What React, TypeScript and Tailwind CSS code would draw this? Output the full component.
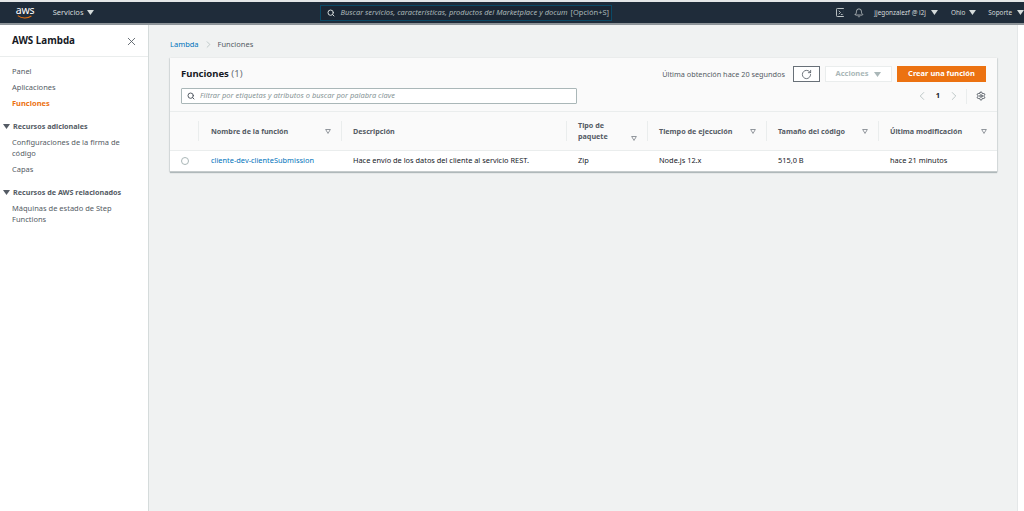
import { ChevronLeft, ChevronRight, RotateCw, Search, Settings, X, Bell } from "lucide-react";

const font = { fontFamily: '"Noto Sans", sans-serif' };

function Caret({ className = "" }: { className?: string }) {
  return (
    <svg viewBox="0 0 10 7" className={`h-[5px] w-[7px] ${className}`}>
      <path d="M0 0h10L5 7z" fill="currentColor" />
    </svg>
  );
}

function SortIcon() {
  return (
    <svg viewBox="0 0 8 7" className="h-[5px] w-[6px] shrink-0 text-[#687078]">
      <path d="M.7.7h6.6L4 6.2z" fill="none" stroke="currentColor" strokeWidth="1" />
    </svg>
  );
}

function AwsLogo() {
  return (
    <div className="flex w-[18px] flex-col items-center">
      <span className="text-[10.5px] leading-[9px] tracking-[-0.2px] text-white">aws</span>
      <svg viewBox="0 0 20 5" className="h-[4px] w-[18px]">
        <path d="M1 .8C6 4.6 13 4.6 18 1.2" fill="none" stroke="#ec7211" strokeWidth="1.3" />
      </svg>
    </div>
  );
}

function TopBar() {
  return (
    <header className="flex h-[25px] shrink-0 items-center border-y-[2px] border-t-[#e4e7e8] border-b-[#8d9499] bg-[#1f2c3a] text-[#d5dbdb]">
      <div className="ml-[16px] w-[37px]">
        <AwsLogo />
      </div>
      <span className="text-[7.5px]">Servicios</span>
      <Caret className="ml-[4px]" />
      <div className="ml-[226px] flex h-[16px] w-[294px] items-center border border-[#0b4a66] bg-[#1b2633] pl-[6px]">
        <Search className="h-[8px] w-[8px] text-[#d5dbdb]" strokeWidth={3} />
        <span className="ml-[5px] text-[7.5px] whitespace-nowrap text-[#aab7b8] italic">
          Buscar servicios, características, productos del Marketplace y docum
        </span>
        <span className="ml-[3px] text-[7.5px] whitespace-nowrap text-[#aab7b8]">[Opción+S]</span>
      </div>
      <svg viewBox="0 0 10 10" className="ml-[224px] h-[9px] w-[9px] text-[#d5dbdb]">
        <rect x=".5" y=".5" width="9" height="9" rx="1" fill="none" stroke="currentColor" />
        <path d="M3 3l2 2-2 2M5.5 7.2H7.5" fill="none" stroke="currentColor" strokeWidth=".9" />
      </svg>
      <Bell className="ml-[10px] h-[10px] w-[10px]" strokeWidth={1.8} />
      <span className="ml-[10px] text-[6.4px] whitespace-nowrap">jjegonzalezf @ i2j</span>
      <Caret className="ml-[5px]" />
      <span className="ml-[13px] text-[6.4px]">Ohio</span>
      <Caret className="ml-[4px]" />
      <span className="ml-[12px] text-[6.4px]">Soporte</span>
      <Caret className="ml-[5px]" />
    </header>
  );
}

function NavSection({ title, items }: { title: string; items: string[] }) {
  return (
    <div className="mt-[12px]">
      <div className="flex h-[10px] items-center text-[7.2px] font-bold text-[#545b64]">
        <Caret className="mr-[3px] ml-[3px] h-[4px] w-[5px]" />
        {title}
      </div>
      <div className="mt-[6px] flex flex-col gap-[5px] pr-[24px] pl-[12px] text-[7.5px] leading-[11px] text-[#545b64]">
        {items.map((item) => (
          <p key={item}>{item}</p>
        ))}
      </div>
    </div>
  );
}

function Sidebar() {
  return (
    <aside className="w-[149px] shrink-0 border-r border-[#d5dbdb] bg-white">
      <div className="flex h-[32px] items-center justify-between border-b border-[#eaeded] pt-[1px] pr-[10px] pl-[12px]">
        <h1 className="text-[9.8px] font-bold text-[#16191f]">AWS Lambda</h1>
        <X className="h-[13px] w-[13px] text-[#545b64]" strokeWidth={1.6} />
      </div>
      <nav className="pt-[9px]">
        <div className="flex flex-col gap-[5px] pl-[12px] text-[7.5px] leading-[11px] text-[#545b64]">
          <p>Panel</p>
          <p>Aplicaciones</p>
          <p className="font-bold text-[#ec7211]">Funciones</p>
        </div>
        <NavSection title="Recursos adicionales" items={["Configuraciones de la firma de código", "Capas"]} />
        <NavSection title="Recursos de AWS relacionados" items={["Máquinas de estado de Step Functions"]} />
      </nav>
    </aside>
  );
}

const columns = [
  { label: "Nombre de la función", width: "w-[143px]", sort: true },
  { label: "Descripción", width: "w-[225px]", sort: false },
  { label: "Tipo de paquete", width: "w-[81px]", sort: true },
  { label: "Tiempo de ejecución", width: "w-[119px]", sort: true },
  { label: "Tamaño del código", width: "w-[112px]", sort: true },
  { label: "Última modificación", width: "flex-1", sort: true },
];

const cells = [
  { text: "cliente-dev-clienteSubmission", width: "w-[143px]", link: true },
  { text: "Hace envío de los datos del cliente al servicio REST.", width: "w-[225px]", link: false },
  { text: "Zip", width: "w-[81px]", link: false },
  { text: "Node.js 12.x", width: "w-[119px]", link: false },
  { text: "515,0 B", width: "w-[112px]", link: false },
  { text: "hace 21 minutos", width: "flex-1", link: false },
];

function FunctionsCard() {
  return (
    <section className="w-[827px] border-b border-[#c5cbcc] bg-[#fafafa] shadow-[0_1px_1px_rgba(0,28,36,0.25),1px_0_1px_rgba(0,28,36,0.08),-1px_0_1px_rgba(0,28,36,0.08)]">
      <div className="h-[54px] border-b border-[#eaeded] px-[11px]">
        <div className="flex h-[30px] items-center pt-[2px]">
          <h2 className="text-[9.5px] font-bold text-[#16191f]">
            Funciones <span className="font-normal text-[#687078]">(1)</span>
          </h2>
          <span className="ml-auto text-[7.3px] text-[#545b64]">Última obtención hace 20 segundos</span>
          <button className="ml-[8px] flex h-[16px] w-[27px] items-center justify-center border border-[#687078] bg-white text-[#545b64]">
            <RotateCw className="h-[11px] w-[11px]" strokeWidth={1.8} />
          </button>
          <button className="ml-[5px] flex h-[16px] w-[67px] items-center justify-center gap-[6px] border border-[#eaeded] bg-white text-[7.5px] font-bold text-[#aab7b8]">
            Acciones
            <Caret />
          </button>
          <button className="ml-[5px] h-[16px] w-[89px] border border-[#ec7211] bg-[#ec7211] text-[7.5px] font-bold text-white">
            Crear una función
          </button>
        </div>
        <div className="flex items-center">
          <div className="flex h-[16px] w-[396px] items-center rounded-[1px] border border-[#aab7b8] bg-white pl-[5px]">
            <Search className="h-[8px] w-[8px] text-[#545b64]" strokeWidth={3} />
            <span className="ml-[5px] text-[7.5px] text-[#879596] italic">
              Filtrar por etiquetas y atributos o buscar por palabra clave
            </span>
          </div>
          <div className="ml-auto flex items-center text-[#aab7b8]">
            <ChevronLeft className="h-[14px] w-[14px]" strokeWidth={1.3} />
            <span className="mx-[7px] text-[7.5px] font-bold text-[#16191f]">1</span>
            <ChevronRight className="h-[14px] w-[14px]" strokeWidth={1.3} />
            <div className="mr-[9px] ml-[5px] h-[15px] border-l border-[#eaeded]" />
            <Settings className="h-[10px] w-[10px] text-[#545b64]" strokeWidth={2.4} />
          </div>
        </div>
      </div>
      <div className="flex h-[38px] items-center text-[7.2px] font-bold text-[#545b64]">
        <div className="h-[20px] w-[29px] border-r border-[#eaeded]" />
        {columns.map((col, i) => (
          <div
            key={col.label}
            className={`flex h-[20px] items-center justify-between pr-[10px] pl-[11px] leading-[11px] ${i === 0 ? "pl-[12px]" : ""} ${col.width} ${i < 5 ? "border-r border-[#eaeded]" : ""}`}
          >
            <span className={col.label === "Tipo de paquete" ? "w-[34px]" : ""}>{col.label}</span>
            {col.sort ? (
              <span className={col.label === "Tipo de paquete" ? "self-end" : ""}>
                <SortIcon />
              </span>
            ) : null}
          </div>
        ))}
      </div>
      <div className="flex h-[21px] items-center border-t border-[#eaeded] bg-white text-[7.4px] text-[#16191f]">
        <div className="flex w-[29px] justify-center">
          <span className="h-[8px] w-[8px] rounded-full border border-[#aab7b8]" />
        </div>
        {cells.map((cell, i) => (
          <div key={cell.text} className={`whitespace-nowrap ${i === 0 ? "pl-[12px]" : "pl-[11px]"} ${cell.width}`}>
            <span className={cell.link ? "text-[#0073bb]" : ""}>{cell.text}</span>
          </div>
        ))}
      </div>
    </section>
  );
}

export default function App() {
  return (
    <div className="flex h-[511px] w-[1024px] flex-col overflow-hidden bg-[#f0f2f2]" style={font}>
      <TopBar />
      <div className="flex min-h-0 flex-1">
        <Sidebar />
        <main className="min-w-0 flex-1 pt-[14px] pl-[21px]">
          <div className="flex h-[11px] items-center text-[7.5px] text-[#545b64]">
            <span className="text-[#0073bb]">Lambda</span>
            <ChevronRight className="mx-[4px] h-[11px] w-[11px] text-[#aab7b8]" strokeWidth={1.5} />
            <span>Funciones</span>
          </div>
          <div className="mt-[8px]">
            <FunctionsCard />
          </div>
        </main>
        <div className="w-[7px] shrink-0 border-l border-[#e4e7e8] bg-white" />
      </div>
    </div>
  );
}
